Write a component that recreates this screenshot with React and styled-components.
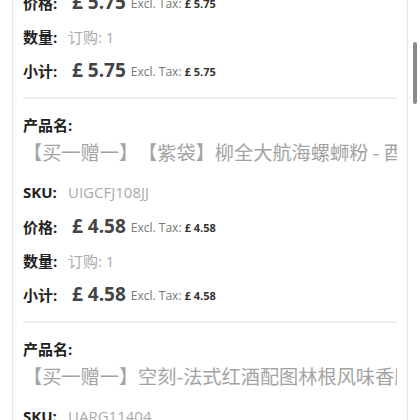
import React from "react";
import styled, { createGlobalStyle } from "styled-components";

const GlobalStyle = createGlobalStyle`
  html, body {
    margin: 0;
    padding: 0;
    height: 420px;
    overflow: hidden;
    background: #fff;
  }
  body {
    font-family: "Open Sans", "Noto Sans CJK SC", sans-serif;
  }
`;

const Card = styled.div`
  margin: -126px 12px 0;
  padding: 0 10px;
  border: 1px solid #e6e6e6;
  background: #fff;
`;

const Item = styled.div`
  padding: 15px 0 10px;
  border-bottom: 2px solid #eeeeee;
`;

const NameLabel = styled.div`
  height: 22px;
  line-height: 22px;
  font-size: 15px;
  font-weight: 700;
  color: #222;
`;

const Name = styled.div`
  margin: 4px 0 11px;
  height: 24px;
  line-height: 24px;
  font-family: "Noto Sans CJK SC", "Open Sans", sans-serif;
  font-size: 19.2px;
  color: #a3a3a3;
  white-space: nowrap;
  overflow: hidden;
  text-spacing-trim: space-all;
  font-kerning: none;
`;

const Row = styled.div`
  display: flex;
  align-items: center;
  height: 34px;
  white-space: nowrap;
`;

const Label = styled.span`
  width: 45px;
  flex-shrink: 0;
  font-size: 15px;
  font-weight: 700;
  color: #222;
`;

const Value = styled.span`
  font-size: 15px;
  color: #aaa;
`;

const Price = styled.span`
  margin-left: 4px;
  font-size: 19px;
  font-weight: 700;
  color: #444;
`;

const Tax = styled.span`
  margin-left: 5px;
  margin-top: 3px;
  font-size: 12px;
  color: #777;

  b {
    font-size: 11px;
    font-weight: 700;
    color: #333;
  }
`;

const ScrollThumb = styled.div`
  position: fixed;
  top: 42px;
  left: 413px;
  width: 4px;
  height: 62px;
  border-radius: 2px;
  background: #8a8a8a;
`;

const items = [
  {
    name: "【买一赠一】【买一赠一】空刻-法式番茄肉酱意大利面",
    sku: "UARG11403",
    price: "5.75",
  },
  {
    name: "【买一赠一】【紫袋】柳全大航海螺蛳粉 - 酉酸笋加量版",
    sku: "UIGCFJ108JJ",
    price: "4.58",
  },
  {
    name: "【买一赠一】空刻-法式红酒配图林根风味香肠意面",
    sku: "UARG11404",
    price: "5.75",
  },
];

const PriceRow = ({ label, price }) => (
  <Row>
    <Label>{label}</Label>
    <Price>£ {price}</Price>
    <Tax>
      Excl. Tax: <b>£ {price}</b>
    </Tax>
  </Row>
);

const OrderItem = ({ item }) => (
  <Item>
    <NameLabel>产品名:</NameLabel>
    <Name>{item.name}</Name>
    <Row>
      <Label>SKU:</Label>
      <Value>{item.sku}</Value>
    </Row>
    <PriceRow label="价格:" price={item.price} />
    <Row>
      <Label>数量:</Label>
      <Value>订购: 1</Value>
    </Row>
    <PriceRow label="小计:" price={item.price} />
  </Item>
);

export default function App() {
  return (
    <>
      <GlobalStyle />
      <Card>
        {items.map((item) => (
          <OrderItem key={item.sku} item={item} />
        ))}
      </Card>
      <ScrollThumb />
    </>
  );
}
